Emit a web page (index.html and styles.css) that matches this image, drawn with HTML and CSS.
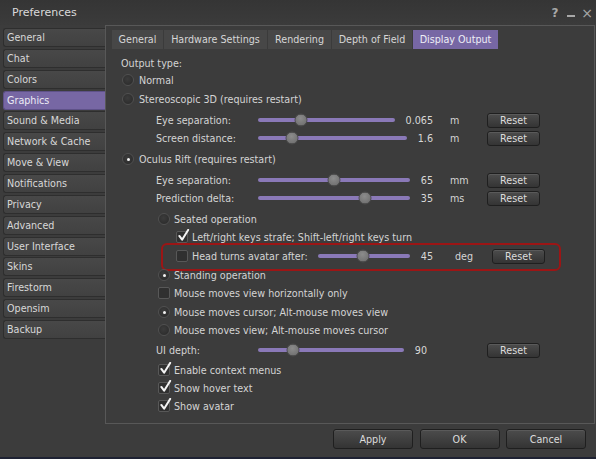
FILE: index.html
```html
<!DOCTYPE html>
<html>
<head>
<meta charset="utf-8">
<link rel="stylesheet" href="styles.css">
</head>
<body>
<div class="window">
  <div class="titlebar">
    <span class="title">Preferences</span>
    <div class="controls">
      <span class="ctl q">?</span>
      <span class="ctl min"></span>
      <span class="ctl close">×</span>
    </div>
  </div>
  <div class="main">
    <nav class="sidebar">
      <div class="side-btn">General</div>
      <div class="side-btn">Chat</div>
      <div class="side-btn">Colors</div>
      <div class="side-btn active">Graphics</div>
      <div class="side-btn">Sound &amp; Media</div>
      <div class="side-btn">Network &amp; Cache</div>
      <div class="side-btn">Move &amp; View</div>
      <div class="side-btn">Notifications</div>
      <div class="side-btn">Privacy</div>
      <div class="side-btn">Advanced</div>
      <div class="side-btn">User Interface</div>
      <div class="side-btn">Skins</div>
      <div class="side-btn">Firestorm</div>
      <div class="side-btn">Opensim</div>
      <div class="side-btn">Backup</div>
    </nav>
    <section class="panel">
      <div class="tabs">
        <div class="tab t-general">General</div>
        <div class="tab t-hw">Hardware Settings</div>
        <div class="tab t-render">Rendering</div>
        <div class="tab t-dof">Depth of Field</div>
        <div class="tab t-disp active">Display Output</div>
      </div>
      <div class="content">
        <div class="row mt6 ind0">Output type:</div>
        <div class="row mt1 ind1"><span class="radio"></span><span>Normal</span></div>
        <div class="row mt3 ind1"><span class="radio"></span><span>Stereoscopic 3D (requires restart)</span></div>

        <div class="row mt5 indl">
          <span class="slabel">Eye separation:</span>
          <div class="sgroup">
            <div class="track"><span class="thumb" style="left:31.4%"></span></div>
            <span class="val">0.065</span>
          </div>
          <span class="unit">m</span>
          <button class="btn sm">Reset</button>
        </div>
        <div class="row mt2 indl">
          <span class="slabel">Screen distance:</span>
          <div class="sgroup">
            <div class="track"><span class="thumb" style="left:22.8%"></span></div>
            <span class="val">1.6</span>
          </div>
          <span class="unit">m</span>
          <button class="btn sm">Reset</button>
        </div>

        <div class="row mt5 ind1"><span class="radio on"></span><span>Oculus Rift (requires restart)</span></div>

        <div class="row mt5 indl">
          <span class="slabel">Eye separation:</span>
          <div class="sgroup">
            <div class="track"><span class="thumb" style="left:50.3%"></span></div>
            <span class="val">65</span>
          </div>
          <span class="unit">mm</span>
          <button class="btn sm">Reset</button>
        </div>
        <div class="row mt2 indl">
          <span class="slabel">Prediction delta:</span>
          <div class="sgroup">
            <div class="track"><span class="thumb" style="left:70.2%"></span></div>
            <span class="val">35</span>
          </div>
          <span class="unit">ms</span>
          <button class="btn sm">Reset</button>
        </div>

        <div class="row mt5 ind2"><span class="radio"></span><span>Seated operation</span></div>
        <div class="row mt2 ind3"><span class="check on"><svg viewBox="0 0 14 14"><path d="M2.5 7.5 L5.5 11.5 L12 1"/></svg></span><span>Left/right keys strafe; Shift-left/right keys turn</span></div>

        <div class="row mt3 indh highlight">
          <span class="hlabel"><span class="check"></span><span>Head turns avatar after:</span></span>
          <div class="sgroup short">
            <div class="track"><span class="thumb" style="left:48.9%"></span></div>
            <span class="val">45</span>
          </div>
          <span class="unit wide">deg</span>
          <button class="btn sm">Reset</button>
        </div>

        <div class="row mt3 ind2"><span class="radio on"></span><span>Standing operation</span></div>
        <div class="row mt2 ind2"><span class="check"></span><span>Mouse moves view horizontally only</span></div>
        <div class="row mt3 ind2"><span class="radio on"></span><span>Mouse moves cursor; Alt-mouse moves view</span></div>
        <div class="row mt2 ind2"><span class="radio"></span><span>Mouse moves view; Alt-mouse moves cursor</span></div>

        <div class="row mt4 indl">
          <span class="slabel">UI depth:</span>
          <div class="sgroup ui">
            <div class="track"><span class="thumb" style="left:24%"></span></div>
            <span class="val">90</span>
          </div>
          <button class="btn sm far">Reset</button>
        </div>

        <div class="row mt4 ind2"><span class="check on"><svg viewBox="0 0 14 14"><path d="M2.5 7.5 L5.5 11.5 L12 1"/></svg></span><span>Enable context menus</span></div>
        <div class="row mt2 ind2"><span class="check on"><svg viewBox="0 0 14 14"><path d="M2.5 7.5 L5.5 11.5 L12 1"/></svg></span><span>Show hover text</span></div>
        <div class="row mt2 ind2"><span class="check on"><svg viewBox="0 0 14 14"><path d="M2.5 7.5 L5.5 11.5 L12 1"/></svg></span><span>Show avatar</span></div>
      </div>
    </section>
  </div>
  <div class="footer">
    <button class="btn lg">Apply</button>
    <button class="btn lg">OK</button>
    <button class="btn lg">Cancel</button>
  </div>
</div>
</body>
</html>
```

FILE: styles.css
```css
* { box-sizing: border-box; }

body {
  margin: 0;
  background: #1e2233;
  font-family: "DejaVu Sans", "Noto Sans", sans-serif;
  font-size: 9.6px;
  color: #d4d4d4;
}

.window {
  width: 596px;
  height: 457px;
  background: #3c3c3c;
  display: flex;
  flex-direction: column;
}

.titlebar {
  height: 25px;
  display: flex;
  align-items: center;
  padding-left: 12px;
  background: linear-gradient(#353535, #3b3b3b);
}

.title {
  flex: 1;
  font-size: 11px;
  color: #dadada;
}

.controls {
  display: flex;
  align-items: center;
  padding-right: 1px;
}

.ctl {
  color: #a8a8a8;
  width: 16px;
  text-align: center;
  font-size: 12px;
  font-weight: bold;
}

.ctl.min {
  height: 2px;
  width: 8px;
  margin: 6px 4px 0 4px;
  background: #a8a8a8;
}

.ctl.close {
  font-size: 14px;
  font-weight: normal;
}

.main {
  display: flex;
  height: 399px;
}

.sidebar {
  width: 105px;
  padding: 3px 0 0 3px;
  display: flex;
  flex-direction: column;
  gap: 1.86px;
}

.side-btn {
  height: 19px;
  display: flex;
  align-items: center;
  padding-left: 3px;
  background: linear-gradient(#484848, #414141);
  border: 1px solid #2e2e2e;
  border-right: none;
  border-radius: 3px 0 0 3px;
  color: #d8d8d8;
}

.side-btn.active {
  background: #7767a4;
  border-color: #5e5188;
  color: #ececf4;
}

.panel {
  width: 490px;
  border: 1px solid #585858;
  background: #3c3c3c;
}

.tabs {
  display: flex;
  height: 19px;
  margin: 4px 0 0 6px;
}

.tab {
  display: flex;
  align-items: center;
  justify-content: center;
  background: #474747;
  border-right: 1px solid #3b3b3b;
  color: #d6d6d6;
}

.t-general { width: 52px; }
.t-hw { width: 104px; }
.t-render { width: 64px; }
.t-dof { width: 81px; }
.t-disp { width: 85px; }

.tab.active {
  background: #7767a4;
  color: #eeeef6;
  border-right: none;
}

.content {
  display: flex;
  flex-direction: column;
}

.row {
  height: 16px;
  display: flex;
  align-items: center;
  white-space: nowrap;
}

.mt1 { margin-top: 1px; }
.mt2 { margin-top: 2px; }
.mt3 { margin-top: 3px; }
.mt4 { margin-top: 4px; }
.mt5 { margin-top: 5px; }
.mt6 { margin-top: 6px; }

.ind0 { padding-left: 15px; }
.ind1 { padding-left: 16px; gap: 5px; }
.ind2 { padding-left: 52px; gap: 4px; }
.ind3 { padding-left: 70px; gap: 4px; }
.indh { padding-left: 70px; }
.indl { padding-left: 50px; }

.radio {
  position: relative;
  width: 12px;
  height: 12px;
  flex: none;
  border-radius: 50%;
  background: radial-gradient(circle at 45% 40%, #3c3c3c, #282828);
  border: 1px solid #505050;
}

.radio.on::after {
  content: "";
  position: absolute;
  left: 3.5px;
  top: 3.5px;
  width: 3px;
  height: 3px;
  border-radius: 50%;
  background: #f2f2f2;
}

.check {
  position: relative;
  width: 12px;
  height: 12px;
  flex: none;
  border-radius: 2px;
  background: #303030;
  border: 1px solid #585858;
}

.check svg {
  position: absolute;
  left: 0;
  top: -3px;
  width: 13px;
  height: 13px;
}

.check svg path {
  fill: none;
  stroke: #f4f4f4;
  stroke-width: 2.2;
  stroke-linecap: round;
  stroke-linejoin: round;
}

.slabel {
  width: 102px;
  flex: none;
}

.hlabel {
  width: 142px;
  flex: none;
  display: flex;
  align-items: center;
  gap: 4px;
}

.sgroup {
  width: 175px;
  flex: none;
  display: flex;
  align-items: center;
  gap: 11px;
}

.sgroup.short { width: 115px; }
.sgroup.ui { width: 169px; }

.track {
  position: relative;
  flex: 1;
  height: 4px;
  border-radius: 2px;
  background: #8a79b8;
}

.thumb {
  position: absolute;
  top: 50%;
  width: 13px;
  height: 13px;
  border-radius: 50%;
  transform: translate(-50%, -50%);
  background: radial-gradient(circle at 45% 35%, #8c8c8c, #6a6a6a);
  border: 1px solid #4c4c4c;
}

.val {
  color: #d8d8d8;
}

.unit {
  width: 37px;
  margin-left: 17px;
  flex: none;
}

.unit.wide { margin-left: 22px; }

.btn {
  font-family: inherit;
  font-size: 9.6px;
  color: #dcdcdc;
  background: linear-gradient(#4c4c4c, #343434);
  border: 1px solid #1f1f1f;
  border-radius: 3px;
  padding: 0;
  box-shadow: inset 0 1px 0 #5a5a5a;
}

.btn.sm {
  width: 53px;
  height: 15px;
  flex: none;
}

.btn.far { margin-left: 60px; }

.btn.lg {
  width: 80px;
  height: 20px;
}

.highlight {
  position: relative;
}

.highlight::after {
  content: "";
  position: absolute;
  left: 55px;
  top: -5px;
  width: 396px;
  height: 24px;
  border: 2px solid #9c1515;
  border-radius: 6px;
  pointer-events: none;
}

.footer {
  height: 33px;
  display: flex;
  justify-content: flex-end;
  align-items: flex-start;
  padding: 5px 10px 0 0;
  gap: 6.5px;
}
```
